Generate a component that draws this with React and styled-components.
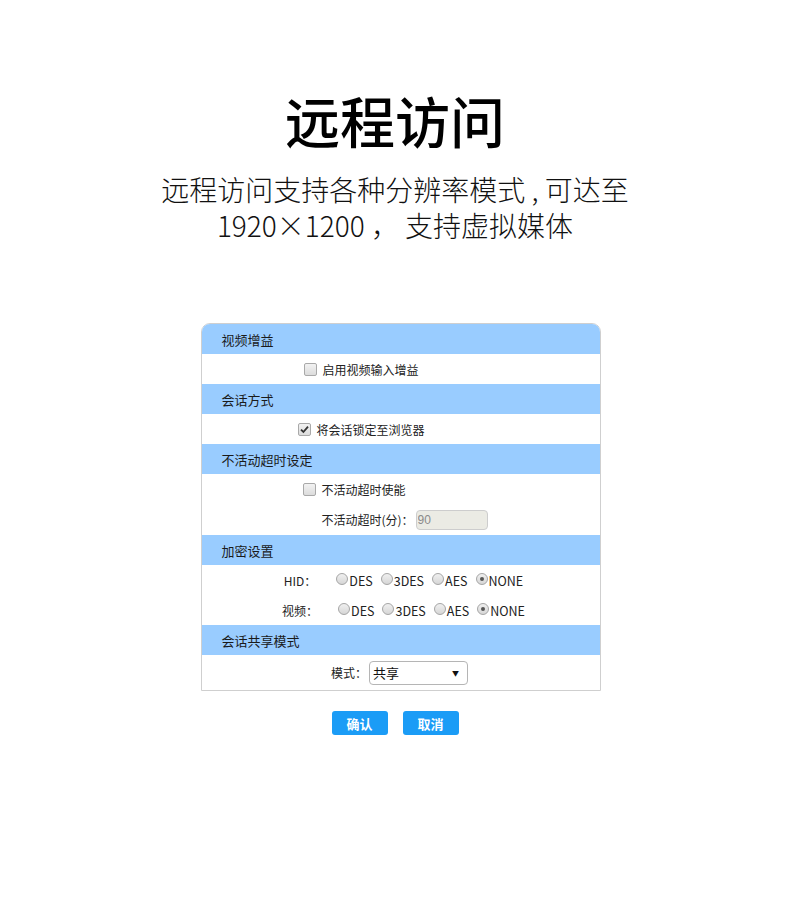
import React from 'react';
import styled, { createGlobalStyle } from 'styled-components';

const GlobalStyle = createGlobalStyle`
  body {
    margin: 0;
    background: #fff;
    font-family: "Noto Sans CJK SC", "Noto Sans", sans-serif;
    color: #111;
  }
`;

const Page = styled.div`
  width: 790px;
  padding-top: 84px;
  display: flex;
  flex-direction: column;
  align-items: center;
`;

const Title = styled.h1`
  margin: 0;
  font-size: 55px;
  font-weight: 500;
  line-height: 70px;
  color: #000;
`;

const Subtitle = styled.p`
  margin: 17px 0 0;
  font-size: 28px;
  line-height: 36px;
  font-weight: 300;
  text-align: center;
  color: #111;
`;

const Panel = styled.div`
  margin-top: 80px;
  margin-left: 11px;
  width: 400px;
  box-sizing: border-box;
  border: 1px solid #cfcfcf;
  border-radius: 9px 9px 0 0;
  overflow: hidden;
  font-family: "Noto Sans CJK SC", "Liberation Sans", sans-serif;
  font-size: 12px;
  color: #222;
`;

const Header = styled.div`
  height: 30px;
  background: #99ccff;
  padding-left: 20px;
  display: flex;
  align-items: center;
  font-size: 13px;
  color: #1a1a1a;
`;

const Body = styled.div`
  background: #fff;
`;

const Row = styled.div`
  height: ${p => p.$h || 30}px;
  display: flex;
  align-items: center;
  justify-content: center;
  gap: ${p => p.$gap || 0}px;
  padding-right: ${p => p.$right || 0}px;
  padding-left: ${p => p.$left || 0}px;
`;

const CheckLabel = styled.label`
  display: flex;
  align-items: center;
  gap: 5px;
  cursor: pointer;
`;

const HiddenInput = styled.input`
  display: none;
`;

const CheckBox = styled.span`
  width: 11px;
  height: 11px;
  border: 1px solid #a9a9a9;
  border-radius: 2px;
  background: linear-gradient(#f2f2f2, #dcdcdc);
  display: flex;
  align-items: center;
  justify-content: center;
`;

const Label = styled.span`
  white-space: nowrap;
`;

const RadioGroup = styled.div`
  display: flex;
  align-items: center;
  gap: 8px;
`;

const RadioLabel = styled.label`
  display: flex;
  align-items: center;
  gap: 1px;
  font-size: 12.5px;
`;

const RadioDot = styled.span`
  width: 10px;
  height: 10px;
  border: 1px solid #a5a5a5;
  border-radius: 50%;
  background: linear-gradient(#f0f0f0, #d6d6d6);
  display: flex;
  align-items: center;
  justify-content: center;
  margin-top: -2px;

  &::after {
    content: '';
    width: 4px;
    height: 4px;
    border-radius: 50%;
    background: ${p => (p.$on ? '#555' : 'transparent')};
  }
`;

const TextInput = styled.input`
  width: 72px;
  height: 20px;
  box-sizing: border-box;
  border: 1px solid #cdcdcd;
  border-radius: 4px;
  background: #ebebe4;
  color: #8a8a8a;
  font-family: "Liberation Sans", sans-serif;
  font-size: 12px;
  padding: 0 1px;
  margin-left: 2px;
`;

const SelectBox = styled.div`
  width: 99px;
  height: 24px;
  box-sizing: border-box;
  border: 1px solid #b5b5b5;
  border-radius: 4px;
  margin-left: 2px;
  display: flex;
  align-items: center;
  justify-content: space-between;
  padding: 0 8px 0 3px;
  font-size: 13px;
  color: #111;
`;

const Arrow = styled.span`
  font-size: 7px;
  color: #111;
`;

const Buttons = styled.div`
  margin-top: 20px;
  display: flex;
  gap: 15px;
`;

const Button = styled.button`
  width: 56px;
  height: 24px;
  border: none;
  border-radius: 3px;
  background: #1b9cf6;
  color: #fff;
  font-family: "Noto Sans CJK SC", sans-serif;
  font-size: 13px;
  font-weight: 700;
  padding: 0;
  cursor: pointer;
`;

function Checkbox({ checked, children }) {
  return (
    <CheckLabel>
      <HiddenInput type="checkbox" defaultChecked={checked} />
      <CheckBox>
        {checked && (
          <svg width="9" height="9" viewBox="0 0 9 9">
            <path d="M1 4.6 L3.4 7 L8 1.6" fill="none" stroke="#333" strokeWidth="1.8" />
          </svg>
        )}
      </CheckBox>
      <Label>{children}</Label>
    </CheckLabel>
  );
}

const modes = ['DES', '3DES', 'AES', 'NONE'];

function Radios({ value }) {
  return (
    <RadioGroup>
      {modes.map(m => (
        <RadioLabel key={m}>
          <RadioDot $on={m === value} />
          {m}
        </RadioLabel>
      ))}
    </RadioGroup>
  );
}

export default function App() {
  return (
    <>
      <GlobalStyle />
      <Page>
        <Title>远程访问</Title>
        <Subtitle>
          远程访问支持各种分辨率模式 , 可达至
          <br />
          1920×1200 ， 支持虚拟媒体
        </Subtitle>

        <Panel>
          <Header>视频增益</Header>
          <Body>
            <Row $right={78}>
              <Checkbox>启用视频输入增益</Checkbox>
            </Row>
          </Body>

          <Header>会话方式</Header>
          <Body>
            <Row $right={78}>
              <Checkbox checked>将会话锁定至浏览器</Checkbox>
            </Row>
          </Body>

          <Header>不活动超时设定</Header>
          <Body>
            <Row $right={92}>
              <Checkbox>不活动超时使能</Checkbox>
            </Row>
            <Row $h={31} $left={8}>
              <Label>不活动超时(分)：</Label>
              <TextInput defaultValue="90" disabled />
            </Row>
          </Body>

          <Header>加密设置</Header>
          <Body>
            <Row $gap={20} $left={6}>
              <Label>HID：</Label>
              <Radios value="NONE" />
            </Row>
            <Row $gap={20} $left={6}>
              <Label>视频：</Label>
              <Radios value="NONE" />
            </Row>
          </Body>

          <Header>会话共享模式</Header>
          <Body>
            <Row $h={35} $right={2}>
              <Label>模式：</Label>
              <SelectBox>
                共享
                <Arrow>▼</Arrow>
              </SelectBox>
            </Row>
          </Body>
        </Panel>

        <Buttons>
          <Button>确认</Button>
          <Button>取消</Button>
        </Buttons>
      </Page>
    </>
  );
}
